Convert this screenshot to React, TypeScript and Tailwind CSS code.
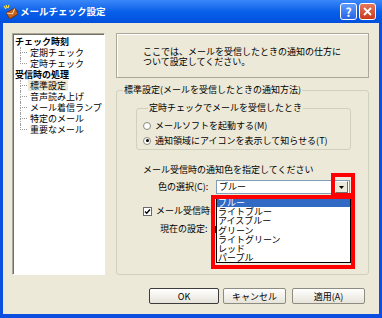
import React from "react";

const treeGroups = [
  { title: "チェック時刻", items: ["定期チェック", "定時チェック"] },
  { title: "受信時の処理", items: ["標準設定", "音声読み上げ", "メール着信ランプ", "特定のメール", "重要なメール"] },
];

const colors = ["ブルー", "ライトブルー", "アイスブルー", "グリーン", "ライトグリーン", "レッド", "パープル"];

function Radio({ checked }: { checked?: boolean }) {
  return (
    <span className="flex h-[8px] w-[8px] shrink-0 items-center justify-center rounded-full border border-[#8a8a80] bg-white">
      {checked && <span className="h-[3px] w-[3px] rounded-full bg-black" />}
    </span>
  );
}

function XpButton({ label, primary, w }: { label: string; primary?: boolean; w: string }) {
  return (
    <div
      className={`flex h-[16px] ${w} items-center justify-center rounded-[2px] border bg-gradient-to-b from-white to-[#e6e4da] text-[9px] leading-none ${
        primary ? "border-[#3c3c3c]" : "border-[#8e8c80]"
      }`}
    >
      {label}
    </div>
  );
}

function TitleIcon() {
  return (
    <svg width="15" height="15" viewBox="0 0 15 15">
      <path d="M1 2 L3 5 M3 1 L4 4 M6 1 L5 4" stroke="#f8e040" strokeWidth="1.2" />
      <g transform="rotate(-30 9 9)">
        <rect x="4" y="6" width="10" height="7" rx="1" fill="#c8641e" stroke="#6a2c08" strokeWidth="0.8" />
        <path d="M4.5 6.5 L9 10 L13.5 6.5" fill="none" stroke="#fff0c0" strokeWidth="0.9" />
      </g>
    </svg>
  );
}

export default function App() {
  return (
    <div className="flex h-[318px] w-[382px] flex-col bg-[#0a4fe0] font-['Noto_Sans_CJK_JP',sans-serif] text-[9px] text-black">
      {/* title bar */}
      <div className="flex h-[23px] shrink-0 items-center bg-gradient-to-b from-[#3a87f8] via-[#0860ea] to-[#0250dc] pl-[3px] pr-[6px]">
        <TitleIcon />
        <span className="ml-[2px] text-[9.5px] font-bold text-white">メールチェック設定</span>
        <div className="ml-auto flex gap-[2px]">
          <div className="flex h-[17px] w-[17px] items-center justify-center rounded-[3px] border border-white bg-gradient-to-b from-[#5d9bff] to-[#2a62e4] text-[12px] font-bold leading-none text-white">
            ?
          </div>
          <div className="flex h-[17px] w-[17px] items-center justify-center rounded-[3px] border border-white bg-gradient-to-b from-[#e8765a] to-[#c8381a]">
            <svg width="9" height="9" viewBox="0 0 9 9">
              <path d="M1 1 L8 8 M8 1 L1 8" stroke="white" strokeWidth="1.8" />
            </svg>
          </div>
        </div>
      </div>

      {/* body */}
      <div className="relative mx-[3px] mb-[4px] flex flex-1 flex-col bg-[#ece9d8]">
        <div className="flex h-[252px] gap-[11px] pl-[9px] pt-[10px]">
          {/* tree */}
          <div className="h-[242px] w-[93px] border-b border-l border-r border-t border-b-white border-l-[#aca899] border-r-white border-t-[#aca899]">
            <div className="h-full w-full border-l border-t border-[#716f64] bg-white pt-[1px]">
              {treeGroups.map((g) => (
                <div key={g.title}>
                  <div className="h-[11px] pl-[1px] font-bold leading-[11px]">{g.title}</div>
                  {g.items.map((it, i) => {
                    const last = i === g.items.length - 1;
                    return (
                      <div key={it} className="flex h-[11px] leading-[11px]">
                        <div className="flex w-[14px] shrink-0 flex-col pl-[6px]">
                          <div className="h-[6px] w-[7px] border-b border-l border-dotted border-[#9c9c9c]" />
                          {!last && <div className="h-[5px] border-l border-dotted border-[#9c9c9c]" />}
                        </div>
                        <span className={`px-[2px] ${it === "標準設定" ? "bg-[#ece9d8]" : ""}`}>{it}</span>
                      </div>
                    );
                  })}
                </div>
              ))}
            </div>
          </div>

          {/* right column */}
          <div className="flex h-[242px] w-[253px] flex-col">
            <div className="h-[45px] border border-[#aca899] pl-[26px] pt-[13px] leading-[10px] shadow-[inset_1px_1px_0_white]">
              <div>ここでは、メールを受信したときの通知の仕方に</div>
              <div>ついて設定してください。</div>
            </div>

            <fieldset className="mt-[6px] flex-1 rounded-[3px] border border-[#d0d0bf]">
              <legend className="ml-[6px] px-[1px] leading-[12px]">標準設定(メールを受信したときの通知方法)</legend>

              <fieldset className="ml-[19px] mr-[17px] mt-[6px] rounded-[3px] border border-[#d0d0bf] pb-[1px] pl-[6px] pt-[4px]">
                <legend className="ml-[5px] px-[1px] leading-[12px]">定時チェックでメールを受信したとき</legend>
                <div className="flex h-[15px] items-center gap-[4px]">
                  <Radio />
                  <span>メールソフトを起動する(M)</span>
                </div>
                <div className="flex h-[15px] items-center gap-[4px]">
                  <Radio checked />
                  <span>通知領域にアイコンを表示して知らせる(T)</span>
                </div>
              </fieldset>

              <div className="ml-[26px] mt-[14px] leading-[12px]">メール受信時の通知色を指定してください</div>

              <div className="ml-[41px] mt-[4px] flex h-[14px] items-center">
                <span className="w-[58px]">色の選択(C):</span>
                <div className="flex h-[14px] w-[134px] items-center border border-[#7f9db9] bg-white pl-[2px]">
                  <span>ブルー</span>
                  <div className="ml-auto mr-[1px] flex h-[12px] w-[13px] items-center justify-center border border-b-[#716f64] border-l-white border-r-[#716f64] border-t-white bg-[#ece9d8]">
                    <svg width="5" height="3" viewBox="0 0 5 3">
                      <path d="M0 0 H5 L2.5 3 Z" fill="black" />
                    </svg>
                  </div>
                </div>
              </div>

              {/* checkbox row: the rest of its label is hidden under the open list */}
              <div className="ml-[26px] mt-[11px] flex h-[12px] items-center gap-[4px]">
                <svg width="9" height="9" viewBox="0 0 9 9" className="shrink-0">
                  <rect x="0.5" y="0.5" width="8" height="8" fill="white" stroke="#6a6a6a" />
                  <path d="M2 4.5 L3.7 6.3 L7 2.5" fill="none" stroke="black" strokeWidth="1.3" />
                </svg>
                <span className="w-[56px] overflow-hidden whitespace-nowrap">メール受信時にアイコンを点滅する</span>
              </div>

              <div className="ml-[43px] mt-[6px] flex h-[12px] items-center">
                <span className="w-[55px]">現在の設定:</span>
                <span className="h-[7px] w-[3px] bg-black" />
              </div>
            </fieldset>
          </div>
        </div>

        {/* buttons */}
        <div className="mt-[13px] flex justify-end pr-[14px]">
          <XpButton label="OK" primary w="w-[70px]" />
          <div className="ml-[4px]">
            <XpButton label="キャンセル" w="w-[63px]" />
          </div>
          <div className="ml-[6px]">
            <XpButton label="適用(A)" w="w-[73px]" />
          </div>
        </div>

        {/* open dropdown list + red highlight marks */}
        <div className="absolute left-[213px] top-[174px] h-[66px] w-[135px] border border-black bg-white leading-[9.4px]">
          {colors.map((c, i) => (
            <div key={c} className={`h-[9.2px] pl-[1px] ${i === 0 ? "bg-[#316ac5] text-white" : ""}`}>
              {c}
            </div>
          ))}
        </div>
        <div className="absolute left-[328px] top-[150px] h-[24px] w-[24px] border-4 border-[#ff0000]" />
        <div className="absolute left-[208px] top-[172px] h-[74px] w-[144px] border-4 border-[#ff0000]" />
      </div>
    </div>
  );
}
